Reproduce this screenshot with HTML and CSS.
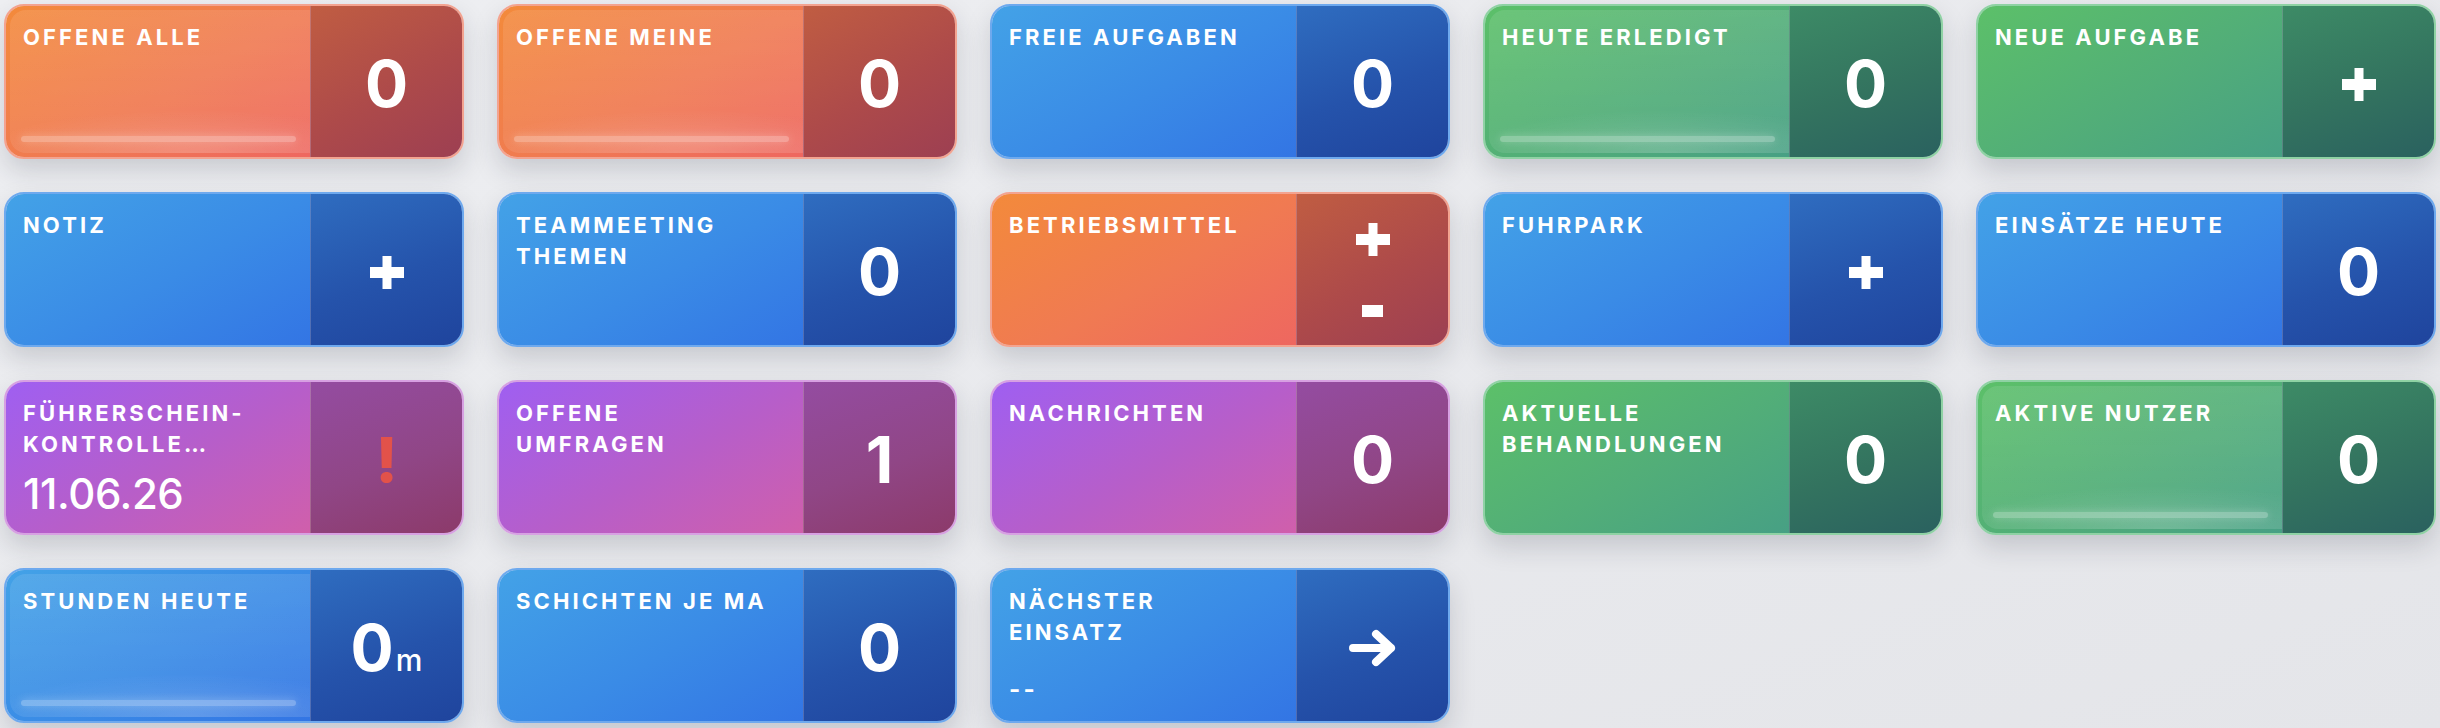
FILE: index.html
```html
<!DOCTYPE html>
<html lang="de">
<head>
    <meta charset="UTF-8">
    <meta name="viewport" content="width=device-width, initial-scale=1.0">
    <title>Dashboard</title>
    <link rel="stylesheet" href="styles.css">
</head>
<body>
    <main class="board">

        <!-- Row 1 -->
        <div class="tile tile--orange tile--live">
            <div class="tile__body"><span class="tile__label">Offene alle</span></div>
            <div class="tile__side"><span class="tile__count">0</span></div>
        </div>
        <div class="tile tile--orange tile--live">
            <div class="tile__body"><span class="tile__label">Offene meine</span></div>
            <div class="tile__side"><span class="tile__count">0</span></div>
        </div>
        <div class="tile tile--blue">
            <div class="tile__body"><span class="tile__label">Freie Aufgaben</span></div>
            <div class="tile__side"><span class="tile__count">0</span></div>
        </div>
        <div class="tile tile--green tile--live">
            <div class="tile__body"><span class="tile__label">Heute erledigt</span></div>
            <div class="tile__side"><span class="tile__count">0</span></div>
        </div>
        <div class="tile tile--green">
            <div class="tile__body"><span class="tile__label">Neue Aufgabe</span></div>
            <div class="tile__side">
                <svg class="icon-plus" viewBox="0 0 34 33"><rect x="12.5" y="0" width="9" height="33"/><rect x="0" y="11" width="34" height="11"/></svg>
            </div>
        </div>

        <!-- Row 2 -->
        <div class="tile tile--blue">
            <div class="tile__body"><span class="tile__label">Notiz</span></div>
            <div class="tile__side">
                <svg class="icon-plus" viewBox="0 0 34 33"><rect x="12.5" y="0" width="9" height="33"/><rect x="0" y="11" width="34" height="11"/></svg>
            </div>
        </div>
        <div class="tile tile--blue">
            <div class="tile__body"><span class="tile__label">Teammeeting Themen</span></div>
            <div class="tile__side"><span class="tile__count">0</span></div>
        </div>
        <div class="tile tile--orange">
            <div class="tile__body"><span class="tile__label">Betriebsmittel</span></div>
            <div class="tile__side tile__side--split">
                <svg class="icon-plus" viewBox="0 0 34 33"><rect x="12.5" y="0" width="9" height="33"/><rect x="0" y="11" width="34" height="11"/></svg>
                <svg class="icon-minus" viewBox="0 0 21 12"><rect x="0" y="0" width="21" height="12"/></svg>
            </div>
        </div>
        <div class="tile tile--blue">
            <div class="tile__body"><span class="tile__label">Fuhrpark</span></div>
            <div class="tile__side">
                <svg class="icon-plus" viewBox="0 0 34 33"><rect x="12.5" y="0" width="9" height="33"/><rect x="0" y="11" width="34" height="11"/></svg>
            </div>
        </div>
        <div class="tile tile--blue">
            <div class="tile__body"><span class="tile__label">Einsätze heute</span></div>
            <div class="tile__side"><span class="tile__count">0</span></div>
        </div>

        <!-- Row 3 -->
        <div class="tile tile--purple">
            <div class="tile__body">
                <span class="tile__label">Führerschein-Kontrolle…</span>
                <span class="tile__date">11.06.26</span>
            </div>
            <div class="tile__side"><span class="tile__alert">!</span></div>
        </div>
        <div class="tile tile--purple">
            <div class="tile__body"><span class="tile__label">Offene Umfragen</span></div>
            <div class="tile__side"><span class="tile__count">1</span></div>
        </div>
        <div class="tile tile--purple">
            <div class="tile__body"><span class="tile__label">Nachrichten</span></div>
            <div class="tile__side"><span class="tile__count">0</span></div>
        </div>
        <div class="tile tile--green">
            <div class="tile__body"><span class="tile__label">Aktuelle Behandlungen</span></div>
            <div class="tile__side"><span class="tile__count">0</span></div>
        </div>
        <div class="tile tile--green tile--live">
            <div class="tile__body"><span class="tile__label">Aktive Nutzer</span></div>
            <div class="tile__side"><span class="tile__count">0</span></div>
        </div>

        <!-- Row 4 -->
        <div class="tile tile--blue tile--live">
            <div class="tile__body"><span class="tile__label">Stunden heute</span></div>
            <div class="tile__side"><span class="tile__count">0<small>m</small></span></div>
        </div>
        <div class="tile tile--blue">
            <div class="tile__body"><span class="tile__label">Schichten je MA</span></div>
            <div class="tile__side"><span class="tile__count">0</span></div>
        </div>
        <div class="tile tile--blue">
            <div class="tile__body">
                <span class="tile__label">Nächster Einsatz</span>
                <span class="tile__empty">--</span>
            </div>
            <div class="tile__side">
                <svg class="icon-arrow" viewBox="0 0 48 38"><path d="M4 19 H42 M27 5 L42 19 L27 33"/></svg>
            </div>
        </div>

    </main>
</body>
</html>
```

FILE: styles.css
```css
/* General Styles */
body {
    margin: 0;
    font-family: Inter, "Noto Sans", sans-serif;
    background: linear-gradient(160deg, #eeeff2, #e4e5e9);
    color: #fff;
    min-height: 100vh;
}

.board {
    display: grid;
    grid-template-columns: repeat(5, 1fr);
    grid-auto-rows: 155px;
    gap: 33px;
    padding: 4px;
}

/* Tile */
.tile {
    display: grid;
    grid-template-columns: 2fr 1fr;
    border: 2px solid var(--edge);
    border-radius: 20px;
    overflow: hidden;
    box-shadow: 0 12px 26px rgba(30, 35, 55, 0.17);
}

.tile--orange {
    --main: linear-gradient(150deg, #f38a3b 0%, #f07a52 55%, #ee6760 100%);
    --side: linear-gradient(150deg, #c05d42 0%, #ad4a4a 55%, #9d3f52 100%);
    --edge: #f3a390;
}

.tile--blue {
    --main: linear-gradient(150deg, #43a2e7 0%, #3a8be6 55%, #3375e4 100%);
    --side: linear-gradient(160deg, #2f6dc0 0%, #2553ab 55%, #1f449d 100%);
    --edge: #6ea9ee;
}

.tile--green {
    --main: linear-gradient(150deg, #5cc069 0%, #52ae78 55%, #47a084 100%);
    --side: linear-gradient(160deg, #3d8b66 0%, #33735f 55%, #2a615f 100%);
    --edge: #8fd2a4;
}

.tile--purple {
    --main: linear-gradient(150deg, #9f5ff1 0%, #b75ec9 55%, #d05fab 100%);
    --side: linear-gradient(160deg, #944ca1 0%, #904686 55%, #8c3a6a 100%);
    --edge: #d7a0e2;
}

.tile__body {
    position: relative;
    display: flex;
    flex-direction: column;
    padding: 16px 24px 0 17px;
    background: var(--main);
}

.tile__side {
    display: flex;
    align-items: center;
    justify-content: center;
    padding-top: 5px;
    background: var(--side);
    border-left: 1px solid rgba(255, 255, 255, 0.22);
}

.tile__side--split {
    flex-direction: column;
    justify-content: space-between;
    padding: 29px 0 28px;
}

.tile__label {
    font-size: 22px;
    line-height: 31px;
    font-weight: 700;
    letter-spacing: 3.1px;
    text-transform: uppercase;
}

.tile__date {
    margin-top: 11px;
    font-size: 42px;
    line-height: 46px;
    font-weight: 500;
    letter-spacing: -0.01em;
}

.tile__empty {
    margin-top: auto;
    margin-bottom: 17px;
    font-size: 24px;
    font-weight: 700;
    letter-spacing: 0.14em;
}

.tile__count {
    font-size: 64px;
    line-height: 1;
    font-weight: 700;
}

.tile__count small {
    font-size: 30px;
    font-weight: 500;
    margin-left: 2px;
}

.tile__alert {
    font-size: 62px;
    line-height: 1;
    font-weight: 800;
    color: #e2524a;
}

.icon-plus {
    width: 34px;
    height: 33px;
    fill: #fff;
}

.icon-minus {
    width: 21px;
    height: 12px;
    fill: #fff;
}

.icon-arrow {
    width: 48px;
    height: 38px;
    fill: none;
    stroke: #fff;
    stroke-width: 8;
    stroke-linecap: round;
    stroke-linejoin: round;
}

/* Highlighted tiles: inner glass panel with a bar at the bottom */
.tile--live .tile__body::before {
    content: "";
    position: absolute;
    top: 4px;
    left: 4px;
    right: 0;
    bottom: 4px;
    border-radius: 16px 0 0 16px;
    background:
        radial-gradient(ellipse 70% 30% at 60% 100%, rgba(255, 255, 255, 0.16), transparent),
        linear-gradient(180deg, rgba(255, 255, 255, 0.10), rgba(255, 255, 255, 0.06));
}

.tile--live .tile__body::after {
    content: "";
    position: absolute;
    left: 15px;
    right: 14px;
    bottom: 15px;
    height: 6px;
    border-radius: 3px;
    background: rgba(255, 255, 255, 0.28);
    box-shadow: 0 0 8px rgba(255, 255, 255, 0.25);
}

.tile--live .tile__label {
    position: relative;
}
```
